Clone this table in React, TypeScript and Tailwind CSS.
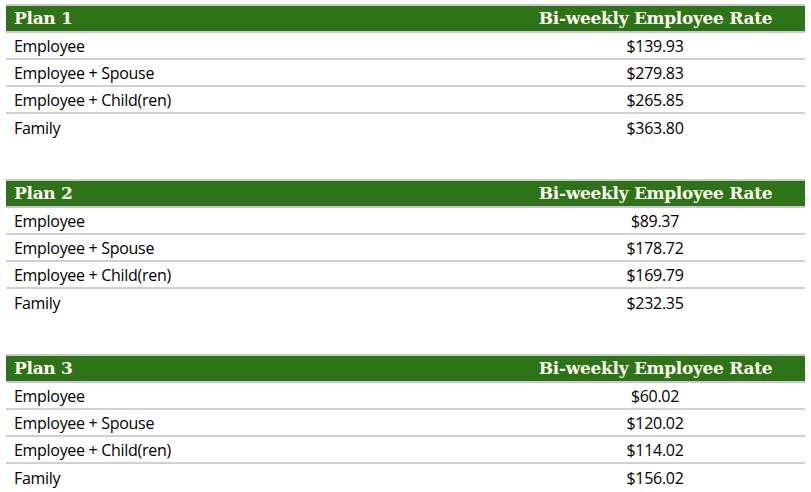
import React from "react";

type Plan = {
  name: string;
  rates: string[];
};

const tiers = ["Employee", "Employee + Spouse", "Employee + Child(ren)", "Family"];

const plans: Plan[] = [
  { name: "Plan 1", rates: ["$139.93", "$279.83", "$265.85", "$363.80"] },
  { name: "Plan 2", rates: ["$89.37", "$178.72", "$169.79", "$232.35"] },
  { name: "Plan 3", rates: ["$60.02", "$120.02", "$114.02", "$156.02"] },
];

function PlanTable({ plan }: { plan: Plan }) {
  return (
    <div className="flex flex-col">
      {/* Header */}
      <div className="flex h-[29px] items-center border-y-2 border-[#c9c9c9] bg-[#2c7417] text-[#fffdf0] font-['DejaVu_Serif',serif] font-bold text-[17px] tracking-[-0.3px]">
        <div className="w-[499px] pl-[8px]">{plan.name}</div>
        <div className="flex-1 text-center pl-[1px]">Bi-weekly Employee Rate</div>
      </div>

      {/* Rows */}
      {tiers.map((tier, i) => (
        <div
          key={tier}
          className={
            "flex h-[27px] items-center text-[16px] text-black font-['Open_Sans',sans-serif] tracking-[-0.3px] " +
            (i < tiers.length - 1 ? "border-b-2 border-[#d0d0d0]" : "")
          }
        >
          <div className="w-[499px] pl-[8px]">{tier}</div>
          <div className="flex-1 text-center">{plan.rates[i]}</div>
        </div>
      ))}
    </div>
  );
}

export default function App() {
  return (
    <div className="w-[811px] h-[492px] bg-white pt-[4px] px-[6px] flex flex-col gap-[38px] overflow-hidden">
      {plans.map((p) => (
        <PlanTable key={p.name} plan={p} />
      ))}
    </div>
  );
}
